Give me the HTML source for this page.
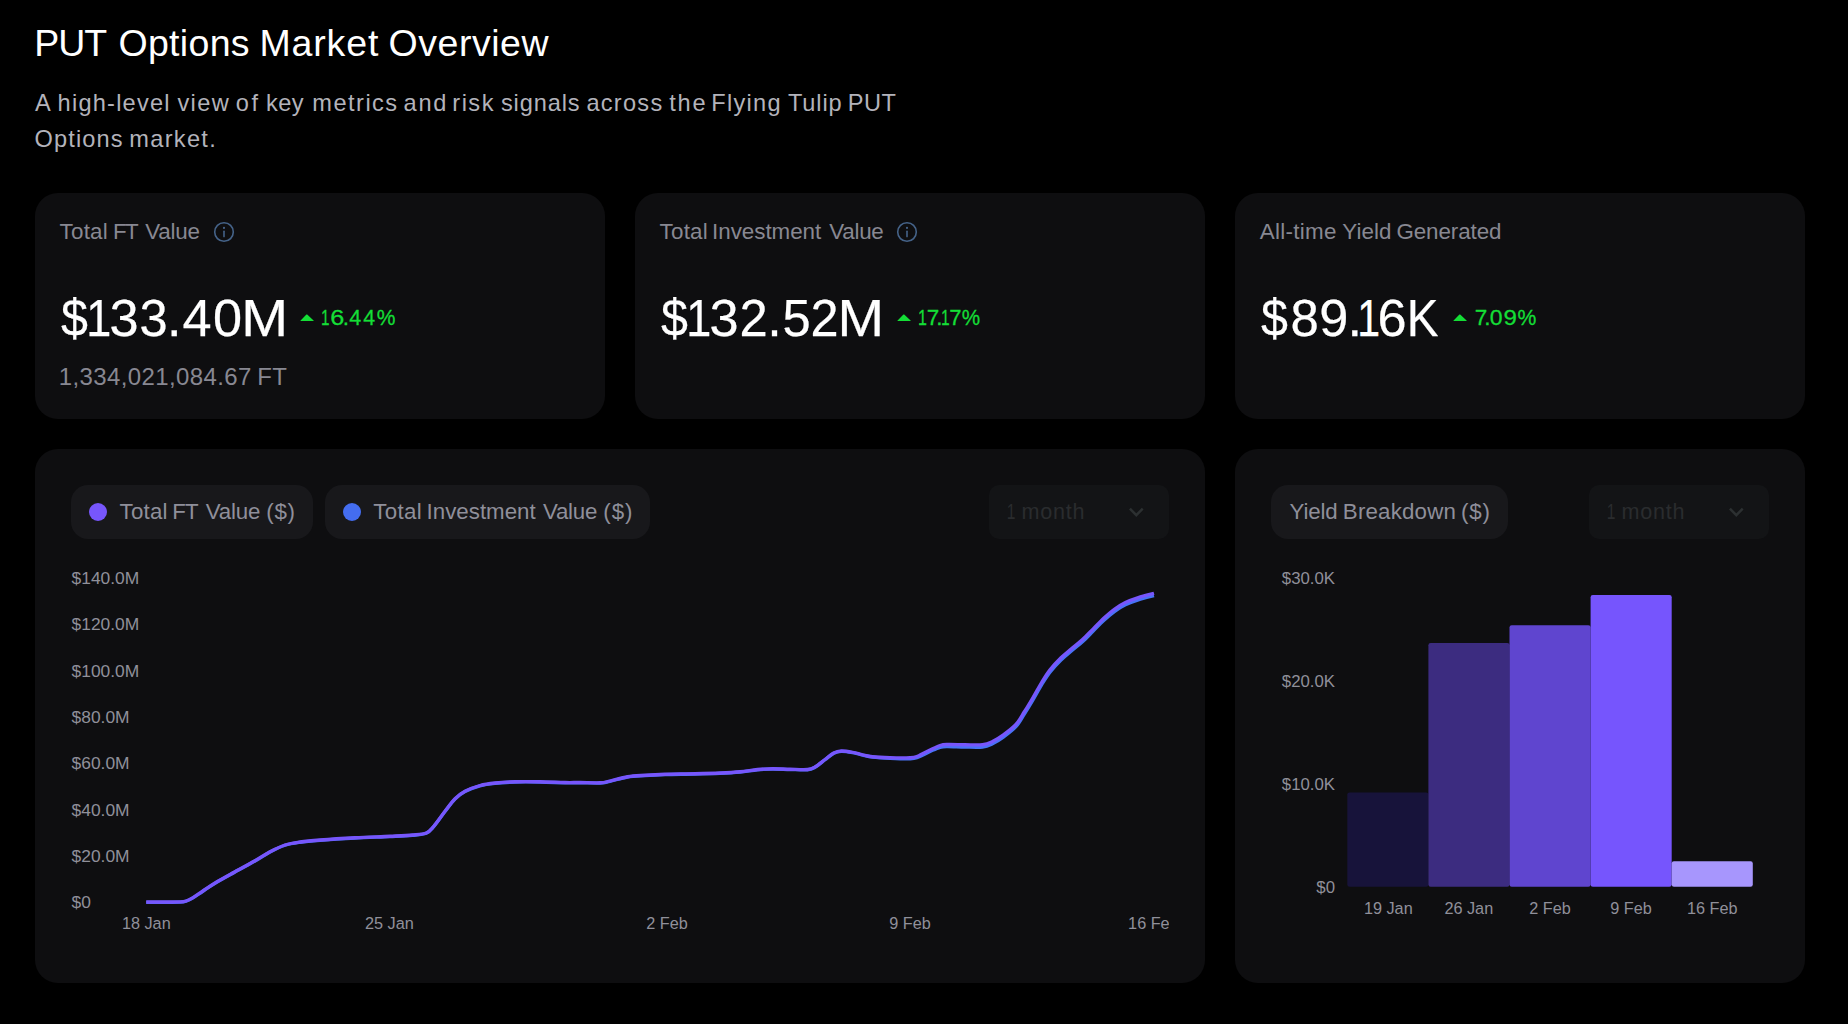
<!DOCTYPE html>
<html><head><meta charset="utf-8"><title>PUT Options Market Overview</title>
<style>
html,body{margin:0;padding:0;background:#000;}
body{width:1848px;height:1024px;position:relative;overflow:hidden;font-family:"Liberation Sans",sans-serif;}
.a{position:absolute;}
.g{position:absolute;left:0;top:0;margin:0;font-weight:normal;}
.g span{position:absolute;white-space:nowrap;line-height:1;}
header{position:absolute;left:0;top:0;}
.card{position:absolute;background:#0e0e10;border-radius:23px;}
.stat{top:193px;width:570px;height:225.9px;}
.panel{top:448.9px;height:533.9px;}
.pill{position:absolute;background:#18181b;border-radius:17px;height:54.2px;}
.dd{position:absolute;background:#131416;border-radius:10px;height:54.2px;width:180px;}
.dot{position:absolute;width:18px;height:18px;border-radius:50%;left:18px;top:18.1px;}
</style></head><body>
<header>
<h1 class="g" id="title" style="font-size:37.5px;color:#ffffff"><span id="title_0" style="left:34.26px;top:25.25px;letter-spacing:-0.992px;">PUT</span> <span id="title_1" style="left:118.41px;top:25.25px;letter-spacing:0.324px;">Options</span> <span id="title_2" style="left:259.52px;top:25.25px;letter-spacing:0.838px;">Market</span> <span id="title_3" style="left:388.52px;top:25.25px;letter-spacing:0.529px;">Overview</span></h1>
<p class="g" id="sub1" style="font-size:23.6px;color:#b3b3bb"><span id="sub1_0" style="left:34.99px;top:91.85px;">A</span> <span id="sub1_1" style="left:57.59px;top:91.74px;letter-spacing:1.221px;">high-level</span> <span id="sub1_2" style="left:177.38px;top:91.75px;letter-spacing:1.393px;">view</span> <span id="sub1_3" style="left:235.84px;top:91.86px;letter-spacing:2.557px;">of</span> <span id="sub1_4" style="left:265.88px;top:91.87px;letter-spacing:0.526px;">key</span> <span id="sub1_5" style="left:312.31px;top:91.84px;letter-spacing:1.473px;">metrics</span> <span id="sub1_6" style="left:403.46px;top:91.72px;letter-spacing:1.802px;">and</span> <span id="sub1_7" style="left:452.31px;top:91.84px;letter-spacing:1.484px;">risk</span> <span id="sub1_8" style="left:500.93px;top:91.82px;letter-spacing:0.878px;">signals</span> <span id="sub1_9" style="left:586.46px;top:91.72px;letter-spacing:1.250px;">across</span> <span id="sub1_10" style="left:669.26px;top:91.82px;letter-spacing:1.728px;">the</span> <span id="sub1_11" style="left:711.28px;top:91.75px;letter-spacing:1.282px;">Flying</span> <span id="sub1_12" style="left:787.91px;top:91.81px;letter-spacing:0.861px;">Tulip</span> <span id="sub1_13" style="left:847.85px;top:91.86px;letter-spacing:0.414px;">PUT</span> <span id="sub2_0" style="left:34.42px;top:127.83px;letter-spacing:1.150px;">Options</span> <span id="sub2_1" style="left:129.31px;top:127.94px;letter-spacing:1.297px;">market.</span></p>
</header>
<section class="card stat" style="left:35px">
<div class="g" id="lab1" style="font-size:22.4px;color:#888892"><span id="lab1_0" style="left:24.62px;top:27.80px;letter-spacing:0.188px;">Total</span> <span id="lab1_1" style="left:77.91px;top:27.78px;letter-spacing:-1.506px;">FT</span> <span id="lab1_2" style="left:110.23px;top:27.79px;letter-spacing:-0.200px;">Value</span></div><svg class="a" style="left:176.9px;top:27.1px" width="24" height="24" viewBox="0 0 24 24" fill="none" stroke="#456389" stroke-width="1.6" stroke-linecap="round"><circle cx="12" cy="12" r="9.3"/><path d="M12 11.2v5.4"/><path d="M12 7.8v.2" stroke-width="2.1"/></svg>
<div class="g" id="val1" style="font-size:52.3px;color:#ffffff;-webkit-text-stroke:0.25px #ffffff"><span style="left:24.60px;top:98.65px;transform:scaleX(0.925);transform-origin:14.40px 50%;">$</span><span style="left:49.02px;top:98.65px;transform:scaleX(0.860);transform-origin:15.26px 50%;">1</span><span style="left:74.58px;top:98.65px;">3</span><span style="left:104.01px;top:98.65px;transform:scaleX(0.968);transform-origin:14.39px 50%;">3</span><span style="left:132.08px;top:98.65px;">.</span><span style="left:147.52px;top:98.65px;">4</span><span style="left:177.96px;top:98.65px;">0</span><span style="left:207.62px;top:98.65px;transform:scaleX(1.075);transform-origin:21.78px 50%;">M</span></div><svg class="a" style="left:264.0px;top:119px" width="17" height="11" viewBox="0 0 17 11"><path d="M8.2 2.6 L14.6 8.4 Q15 9 14.2 9 L1.8 9 Q1 9 1.6 8.4 L7.4 2.6 Q7.8 2.2 8.2 2.6 Z" fill="#14de36"/></svg><div class="g" id="pct1" style="font-size:22.5px;color:#14de36;-webkit-text-stroke:0.3px #14de36"><span style="left:284.34px;top:114.02px;transform:scaleX(0.680);transform-origin:6.56px 50%;">1</span><span style="left:295.72px;top:114.02px;transform:scaleX(1.120);transform-origin:6.33px 50%;">6</span><span style="left:307.72px;top:114.02px;">.</span><span style="left:313.91px;top:114.02px;transform:scaleX(0.953);transform-origin:6.19px 50%;">4</span><span style="left:327.86px;top:114.02px;transform:scaleX(0.944);transform-origin:6.19px 50%;">4</span><span style="left:341.30px;top:114.02px;transform:scaleX(0.935);transform-origin:10.00px 50%;">%</span></div>
<div class="g" id="ft" style="font-size:24px;color:#888892"><span id="ft_0" style="left:23.75px;top:171.82px;letter-spacing:0.380px;">1,334,021,084.67</span> <span id="ft_1" style="left:222.29px;top:171.68px;letter-spacing:0.255px;">FT</span></div>
</section>
<section class="card stat" style="left:635px">
<div class="g" id="lab2" style="font-size:22.4px;color:#888892"><span id="lab2_0" style="left:24.62px;top:27.80px;letter-spacing:0.188px;">Total</span> <span id="lab2_1" style="left:77.11px;top:27.80px;letter-spacing:-0.043px;">Investment</span> <span id="lab2_2" style="left:194.23px;top:27.79px;letter-spacing:-0.254px;">Value</span></div><svg class="a" style="left:259.8px;top:27.1px" width="24" height="24" viewBox="0 0 24 24" fill="none" stroke="#456389" stroke-width="1.6" stroke-linecap="round"><circle cx="12" cy="12" r="9.3"/><path d="M12 11.2v5.4"/><path d="M12 7.8v.2" stroke-width="2.1"/></svg>
<div class="g" id="val2" style="font-size:52.3px;color:#ffffff;-webkit-text-stroke:0.25px #ffffff"><span style="left:24.60px;top:98.65px;transform:scaleX(0.925);transform-origin:14.40px 50%;">$</span><span style="left:49.02px;top:98.65px;transform:scaleX(0.860);transform-origin:15.26px 50%;">1</span><span style="left:74.58px;top:98.65px;">3</span><span style="left:104.31px;top:98.65px;transform:scaleX(0.970);transform-origin:14.54px 50%;">2</span><span style="left:132.33px;top:98.65px;">.</span><span style="left:146.71px;top:98.65px;transform:scaleX(0.968);transform-origin:14.49px 50%;">5</span><span style="left:174.76px;top:98.65px;transform:scaleX(0.965);transform-origin:14.54px 50%;">2</span><span style="left:203.92px;top:98.65px;transform:scaleX(1.069);transform-origin:21.78px 50%;">M</span></div><svg class="a" style="left:261.0px;top:119px" width="17" height="11" viewBox="0 0 17 11"><path d="M8.2 2.6 L14.6 8.4 Q15 9 14.2 9 L1.8 9 Q1 9 1.6 8.4 L7.4 2.6 Q7.8 2.2 8.2 2.6 Z" fill="#14de36"/></svg><div class="g" id="pct2" style="font-size:22.5px;color:#14de36;-webkit-text-stroke:0.3px #14de36"><span style="left:280.59px;top:114.02px;transform:scaleX(0.711);transform-origin:6.56px 50%;">1</span><span style="left:291.63px;top:114.02px;">7</span><span style="left:301.22px;top:114.02px;">.</span><span style="left:303.99px;top:114.02px;transform:scaleX(0.691);transform-origin:6.56px 50%;">1</span><span style="left:313.83px;top:114.02px;transform:scaleX(0.978);transform-origin:6.27px 50%;">7</span><span style="left:326.45px;top:114.02px;transform:scaleX(0.918);transform-origin:10.00px 50%;">%</span></div>
</section>
<section class="card stat" style="left:1235px">
<div class="g" id="lab3" style="font-size:22.4px;color:#888892"><span id="lab3_0" style="left:24.65px;top:27.83px;letter-spacing:0.308px;">All-time</span> <span id="lab3_1" style="left:107.32px;top:27.82px;letter-spacing:0.052px;">Yield</span> <span id="lab3_2" style="left:161.42px;top:27.78px;letter-spacing:-0.086px;">Generated</span></div>
<div class="g" id="val3" style="font-size:52.3px;color:#ffffff;-webkit-text-stroke:0.25px #ffffff"><span style="left:24.60px;top:98.65px;transform:scaleX(0.925);transform-origin:14.40px 50%;">$</span><span style="left:54.81px;top:98.65px;transform:scaleX(0.974);transform-origin:14.54px 50%;">8</span><span style="left:84.37px;top:98.65px;">9</span><span style="left:112.38px;top:98.65px;">.</span><span style="left:118.79px;top:98.65px;transform:scaleX(0.785);transform-origin:15.26px 50%;">1</span><span style="left:142.43px;top:98.65px;">6</span><span style="left:170.16px;top:98.65px;transform:scaleX(0.910);transform-origin:19.29px 50%;">K</span></div><svg class="a" style="left:217.3px;top:119px" width="17" height="11" viewBox="0 0 17 11"><path d="M8.2 2.6 L14.6 8.4 Q15 9 14.2 9 L1.8 9 Q1 9 1.6 8.4 L7.4 2.6 Q7.8 2.2 8.2 2.6 Z" fill="#14de36"/></svg><div class="g" id="pct3" style="font-size:22.5px;color:#14de36;-webkit-text-stroke:0.3px #14de36"><span style="left:239.73px;top:114.03px;">7</span><span style="left:249.27px;top:114.03px;">.</span><span style="left:255.34px;top:114.03px;transform:scaleX(1.023);transform-origin:6.26px 50%;">0</span><span style="left:268.70px;top:114.03px;transform:scaleX(1.068);transform-origin:6.25px 50%;">9</span><span style="left:281.65px;top:114.03px;transform:scaleX(0.940);transform-origin:10.00px 50%;">%</span></div>
</section>
<section class="card panel" style="left:35px;width:1170px">
<div class="pill" style="left:36px;top:36.0px;width:242px"><i class="dot" style="background:#7756fc"></i><span class="g" id="pill1" style="font-size:22.3px;color:#8f8f9a"><span id="pill1_0" style="left:48.62px;top:16.00px;letter-spacing:0.204px;">Total</span> <span id="pill1_1" style="left:101.34px;top:15.99px;letter-spacing:-1.069px;">FT</span> <span id="pill1_2" style="left:134.81px;top:16.02px;letter-spacing:-0.191px;">Value</span> <span id="pill1_3" style="left:195.23px;top:16.01px;letter-spacing:0.744px;">($)</span></span></div>
<div class="pill" style="left:290px;top:36.0px;width:325px"><i class="dot" style="background:#446df0"></i><span class="g" id="pill2" style="font-size:22.3px;color:#8f8f9a"><span id="pill2_0" style="left:48.23px;top:16.00px;letter-spacing:0.325px;">Total</span> <span id="pill2_1" style="left:101.62px;top:15.99px;letter-spacing:-0.002px;">Investment</span> <span id="pill2_2" style="left:217.90px;top:15.99px;letter-spacing:-0.225px;">Value</span> <span id="pill2_3" style="left:278.24px;top:15.98px;letter-spacing:1.022px;">($)</span></span></div>
<div class="dd" style="left:954.1px;top:36.0px"><span class="g" id="dd1" style="font-size:21.6px;color:#2a2c2e"><span id="dd1_0" style="left:16.28px;top:15.79px;transform:scaleX(0.72);">1</span> <span id="dd1_1" style="left:32.32px;top:15.66px;letter-spacing:0.765px;">month</span></span><svg class="a" style="left:137.8px;top:19.1px" width="20" height="16" viewBox="0 0 20 16" fill="none" stroke="#2c3031" stroke-width="2.5" stroke-linecap="butt" stroke-linejoin="miter"><path d="M2.9 4.7 L9.3 11.2 L15.7 4.7"/></svg></div>
<svg class="a chart" style="left:36px;top:111.1px" width="1098" height="390" viewBox="71 560 1098 390" font-family="Liberation Sans, sans-serif" fill="#90909a">
<path d="M146.25 902.30 C149.38 902.30 159.38 902.32 165.00 902.30 C170.62 902.28 176.50 902.37 180.00 902.20 C183.50 902.03 183.83 902.02 186.00 901.30 C188.17 900.58 190.25 899.52 193.00 897.90 C195.75 896.27 198.83 893.98 202.50 891.55 C206.17 889.12 209.58 886.55 215.00 883.30 C220.42 880.05 228.33 875.76 235.00 872.05 C241.67 868.34 249.17 864.38 255.00 861.05 C260.83 857.72 265.00 854.67 270.00 852.05 C275.00 849.42 280.00 846.92 285.00 845.30 C290.00 843.67 294.17 843.13 300.00 842.30 C305.83 841.47 310.83 841.01 320.00 840.30 C329.17 839.59 343.33 838.67 355.00 838.05 C366.67 837.42 380.42 837.01 390.00 836.55 C399.58 836.09 406.46 835.84 412.50 835.30 C418.54 834.76 422.71 834.76 426.25 833.30 C429.79 831.84 430.62 830.17 433.75 826.55 C436.88 822.92 441.46 816.13 445.00 811.55 C448.54 806.97 451.67 802.38 455.00 799.05 C458.33 795.72 460.83 793.76 465.00 791.55 C469.17 789.34 475.00 787.17 480.00 785.80 C485.00 784.42 489.17 783.92 495.00 783.30 C500.83 782.67 507.50 782.26 515.00 782.05 C522.50 781.84 531.67 781.92 540.00 782.05 C548.33 782.17 558.33 782.67 565.00 782.80 C571.67 782.92 574.17 782.76 580.00 782.80 C585.83 782.84 595.00 783.30 600.00 783.05 C605.00 782.80 605.42 782.30 610.00 781.30 C614.58 780.30 621.67 778.01 627.50 777.05 C633.33 776.09 638.75 775.97 645.00 775.55 C651.25 775.13 656.67 774.80 665.00 774.55 C673.33 774.30 685.83 774.26 695.00 774.05 C704.17 773.84 712.50 773.63 720.00 773.30 C727.50 772.97 733.75 772.63 740.00 772.05 C746.25 771.47 752.08 770.30 757.50 769.80 C762.92 769.30 767.08 769.09 772.50 769.05 C777.92 769.01 784.17 769.42 790.00 769.55 C795.83 769.67 803.33 770.17 807.50 769.80 C811.67 769.42 812.08 768.97 815.00 767.30 C817.92 765.63 821.88 762.13 825.00 759.80 C828.12 757.47 831.04 754.72 833.75 753.30 C836.46 751.88 838.12 751.42 841.25 751.30 C844.38 751.17 848.96 751.92 852.50 752.55 C856.04 753.17 859.17 754.30 862.50 755.05 C865.83 755.80 867.92 756.51 872.50 757.05 C877.08 757.59 883.75 758.01 890.00 758.30 C896.25 758.59 905.42 758.94 910.00 758.80 C914.58 758.66 914.17 758.70 917.50 757.49 C920.83 756.28 926.25 753.25 930.00 751.55 C933.75 749.85 937.08 748.14 940.00 747.30 C942.92 746.46 943.33 746.53 947.50 746.49 C951.67 746.45 959.17 746.96 965.00 747.05 C970.83 747.14 977.92 747.59 982.50 747.05 C987.08 746.51 989.08 745.41 992.50 743.80 C995.92 742.19 999.10 740.25 1003.00 737.40 C1006.90 734.55 1012.32 730.63 1015.90 726.70 C1019.48 722.77 1021.65 718.28 1024.50 713.80 C1027.35 709.32 1030.15 704.63 1033.00 699.80 C1035.85 694.97 1038.73 689.45 1041.60 684.80 C1044.47 680.15 1046.97 676.02 1050.20 671.90 C1053.43 667.78 1057.42 663.62 1061.00 660.10 C1064.58 656.58 1068.12 653.85 1071.70 650.80 C1075.28 647.75 1078.92 645.08 1082.50 641.80 C1086.08 638.52 1089.62 634.68 1093.20 631.10 C1096.78 627.52 1100.42 623.60 1104.00 620.30 C1107.58 617.00 1111.13 613.88 1114.70 611.30 C1118.27 608.72 1121.47 606.70 1125.40 604.80 C1129.33 602.90 1133.53 601.43 1138.30 599.90 C1143.07 598.37 1151.38 596.32 1154.00 595.60" fill="none" stroke="#4872f6" stroke-width="3.3" stroke-linejoin="round"/>
<path d="M146.25 902.00 C149.38 902.00 159.38 902.02 165.00 902.00 C170.62 901.98 176.50 902.07 180.00 901.90 C183.50 901.73 183.83 901.72 186.00 901.00 C188.17 900.28 190.25 899.23 193.00 897.60 C195.75 895.98 198.83 893.68 202.50 891.25 C206.17 888.82 209.58 886.25 215.00 883.00 C220.42 879.75 228.33 875.46 235.00 871.75 C241.67 868.04 249.17 864.08 255.00 860.75 C260.83 857.42 265.00 854.38 270.00 851.75 C275.00 849.12 280.00 846.62 285.00 845.00 C290.00 843.38 294.17 842.83 300.00 842.00 C305.83 841.17 310.83 840.71 320.00 840.00 C329.17 839.29 343.33 838.38 355.00 837.75 C366.67 837.12 380.42 836.71 390.00 836.25 C399.58 835.79 406.46 835.54 412.50 835.00 C418.54 834.46 422.71 834.46 426.25 833.00 C429.79 831.54 430.62 829.88 433.75 826.25 C436.88 822.62 441.46 815.83 445.00 811.25 C448.54 806.67 451.67 802.08 455.00 798.75 C458.33 795.42 460.83 793.46 465.00 791.25 C469.17 789.04 475.00 786.88 480.00 785.50 C485.00 784.12 489.17 783.62 495.00 783.00 C500.83 782.38 507.50 781.96 515.00 781.75 C522.50 781.54 531.67 781.62 540.00 781.75 C548.33 781.88 558.33 782.38 565.00 782.50 C571.67 782.62 574.17 782.46 580.00 782.50 C585.83 782.54 595.00 783.00 600.00 782.75 C605.00 782.50 605.42 782.00 610.00 781.00 C614.58 780.00 621.67 777.71 627.50 776.75 C633.33 775.79 638.75 775.67 645.00 775.25 C651.25 774.83 656.67 774.50 665.00 774.25 C673.33 774.00 685.83 773.96 695.00 773.75 C704.17 773.54 712.50 773.33 720.00 773.00 C727.50 772.67 733.75 772.33 740.00 771.75 C746.25 771.17 752.08 770.00 757.50 769.50 C762.92 769.00 767.08 768.79 772.50 768.75 C777.92 768.71 784.17 769.12 790.00 769.25 C795.83 769.38 803.33 769.88 807.50 769.50 C811.67 769.12 812.08 768.67 815.00 767.00 C817.92 765.33 821.88 761.83 825.00 759.50 C828.12 757.17 831.04 754.42 833.75 753.00 C836.46 751.58 838.12 751.12 841.25 751.00 C844.38 750.88 848.96 751.62 852.50 752.25 C856.04 752.88 859.17 754.00 862.50 754.75 C865.83 755.50 867.92 756.25 872.50 756.75 C877.08 757.25 883.75 757.58 890.00 757.75 C896.25 757.92 905.42 758.00 910.00 757.75 C914.58 757.50 914.17 757.54 917.50 756.25 C920.83 754.96 926.25 751.79 930.00 750.00 C933.75 748.21 937.08 746.42 940.00 745.50 C942.92 744.58 943.33 744.62 947.50 744.50 C951.67 744.38 959.17 744.71 965.00 744.75 C970.83 744.79 977.92 745.29 982.50 744.75 C987.08 744.21 989.08 743.11 992.50 741.50 C995.92 739.89 999.10 737.95 1003.00 735.10 C1006.90 732.25 1012.32 728.33 1015.90 724.40 C1019.48 720.47 1021.65 715.98 1024.50 711.50 C1027.35 707.02 1030.15 702.33 1033.00 697.50 C1035.85 692.67 1038.73 687.15 1041.60 682.50 C1044.47 677.85 1046.97 673.72 1050.20 669.60 C1053.43 665.48 1057.42 661.32 1061.00 657.80 C1064.58 654.28 1068.12 651.55 1071.70 648.50 C1075.28 645.45 1078.92 642.78 1082.50 639.50 C1086.08 636.22 1089.62 632.38 1093.20 628.80 C1096.78 625.22 1100.42 621.30 1104.00 618.00 C1107.58 614.70 1111.13 611.58 1114.70 609.00 C1118.27 606.42 1121.47 604.40 1125.40 602.50 C1129.33 600.60 1133.53 599.13 1138.30 597.60 C1143.07 596.07 1151.38 594.02 1154.00 593.30" fill="none" stroke="#7756fc" stroke-width="3.3" stroke-linejoin="round"/>
<text x="71.6" y="584.10" font-size="17.4">$140.0M</text>
<text x="71.6" y="630.40" font-size="17.4">$120.0M</text>
<text x="71.6" y="676.70" font-size="17.4">$100.0M</text>
<text x="71.6" y="723.00" font-size="17.4">$80.0M</text>
<text x="71.6" y="769.20" font-size="17.4">$60.0M</text>
<text x="71.6" y="815.50" font-size="17.4">$40.0M</text>
<text x="71.6" y="861.80" font-size="17.4">$20.0M</text>
<text x="71.6" y="908.10" font-size="17.4">$0</text>
<text x="146.3" y="928.8" font-size="16.25" text-anchor="middle">18 Jan</text>
<text x="389.4" y="928.8" font-size="16.25" text-anchor="middle">25 Jan</text>
<text x="667" y="928.8" font-size="16.25" text-anchor="middle">2 Feb</text>
<text x="910" y="928.8" font-size="16.25" text-anchor="middle">9 Feb</text>
<text x="1153.4" y="928.8" font-size="16.25" text-anchor="middle">16 Feb</text>
</svg>
</section>
<section class="card panel" style="left:1235px;width:570px">
<div class="pill" style="left:36px;top:36.0px;width:237px"><span class="g" id="pill3" style="font-size:22.3px;color:#8f8f9a"><span id="pill3_0" style="left:18.61px;top:16.00px;letter-spacing:-0.163px;">Yield</span> <span id="pill3_1" style="left:71.87px;top:16.02px;letter-spacing:0.183px;">Breakdown</span> <span id="pill3_2" style="left:190.06px;top:16.04px;letter-spacing:0.818px;">($)</span></span></div>
<div class="dd" style="left:354.1px;top:36.0px"><span class="g" id="dd2" style="font-size:21.6px;color:#2a2c2e"><span id="dd2_0" style="left:16.14px;top:15.79px;transform:scaleX(0.72);">1</span> <span id="dd2_1" style="left:32.33px;top:16.57px;letter-spacing:0.740px;">month</span></span><svg class="a" style="left:137.8px;top:19.1px" width="20" height="16" viewBox="0 0 20 16" fill="none" stroke="#2c3031" stroke-width="2.5" stroke-linecap="butt" stroke-linejoin="miter"><path d="M2.9 4.7 L9.3 11.2 L15.7 4.7"/></svg></div>
<svg class="a chart" style="left:36px;top:111.1px" width="498" height="390" viewBox="1271 560 498 390" font-family="Liberation Sans, sans-serif" fill="#90909a">
<rect x="1347.30" y="792.40" width="81.1" height="94.30" rx="2.2" ry="2.2" fill="#17133a"/>
<rect x="1428.40" y="643.00" width="81.1" height="243.70" rx="2.2" ry="2.2" fill="#3c2c80"/>
<rect x="1509.50" y="625.25" width="81.1" height="261.45" rx="2.2" ry="2.2" fill="#5f45cf"/>
<rect x="1590.60" y="595.00" width="81.1" height="291.70" rx="2.2" ry="2.2" fill="#7655fd"/>
<rect x="1671.70" y="861.20" width="81.1" height="25.50" rx="2.2" ry="2.2" fill="#a796fd"/>
<text x="1335" y="584.10" font-size="16.8" text-anchor="end">$30.0K</text>
<text x="1335" y="687.10" font-size="16.8" text-anchor="end">$20.0K</text>
<text x="1335" y="790.10" font-size="16.8" text-anchor="end">$10.0K</text>
<text x="1335" y="893.10" font-size="16.8" text-anchor="end">$0</text>
<text x="1388.3" y="913.7" font-size="16.25" text-anchor="middle">19 Jan</text>
<text x="1468.8" y="913.7" font-size="16.25" text-anchor="middle">26 Jan</text>
<text x="1550" y="913.7" font-size="16.25" text-anchor="middle">2 Feb</text>
<text x="1631" y="913.7" font-size="16.25" text-anchor="middle">9 Feb</text>
<text x="1712.2" y="913.7" font-size="16.25" text-anchor="middle">16 Feb</text>
</svg>
</section>
</body></html>
